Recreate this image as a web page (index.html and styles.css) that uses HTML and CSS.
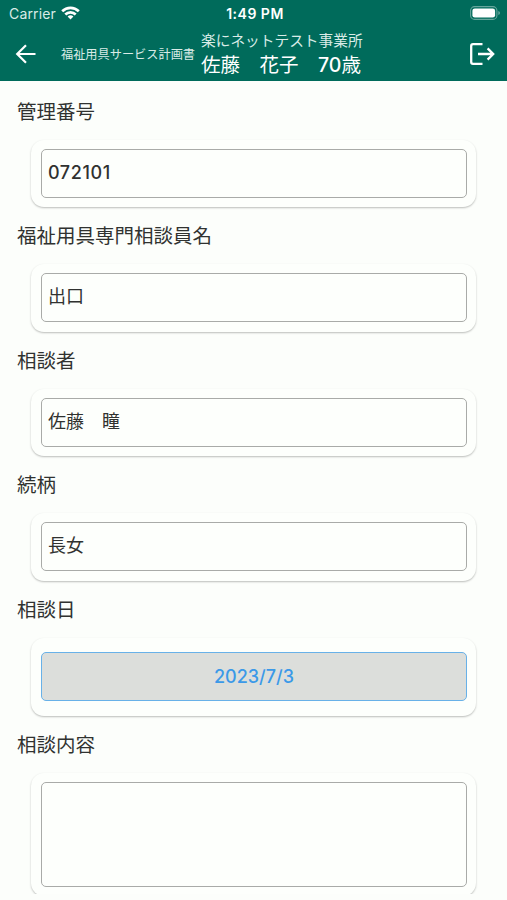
FILE: index.html
```html
<!DOCTYPE html>
<html lang="ja">
<head>
<meta charset="utf-8">
<title>福祉用具サービス計画書</title>
<link rel="stylesheet" href="styles.css">
</head>
<body>
<div class="screen">
  <header class="header">
    <div class="status">
      <div class="carrier">
        <span>Carrier</span>
        <svg class="wifi" width="19" height="14" viewBox="0 0 19 14" fill="none" stroke="#fff" stroke-width="2.7">
          <path d="M1.2 5.2a11.8 11.8 0 0 1 16.6 0"/>
          <path d="M4.3 8.5a7.4 7.4 0 0 1 10.4 0"/>
          <path d="M9.5 13.6l-2.9-3a4.1 4.1 0 0 1 5.8 0z" fill="#fff" stroke="none"/>
        </svg>
      </div>
      <span class="time">1:49 PM</span>
      <svg class="battery" width="31" height="14" viewBox="0 0 31 14">
        <rect x=".6" y=".6" width="26.3" height="12.8" rx="4" fill="none" stroke="#fff" stroke-opacity=".4" stroke-width="1.1"/>
        <rect x="2.4" y="2.4" width="22.7" height="9.2" rx="2.4" fill="#fff"/>
        <path d="M28.4 5v4q1.5-.6 1.5-2t-1.5-2z" fill="#fff" fill-opacity=".45"/>
      </svg>
    </div>
    <div class="bar">
      <svg class="back" width="22" height="20" viewBox="0 0 22 20" fill="none" stroke="#fff" stroke-width="2.2">
        <path d="M20.5 10H2.5M11 1.2L2.2 10l8.8 8.8"/>
      </svg>
      <span class="title">福祉用具サービス計画書</span>
      <div class="client">
        <span class="office">楽にネットテスト事業所</span>
        <span class="person">佐藤　花子　<b>70</b>歳</span>
      </div>
      <svg class="logout" width="26" height="24" viewBox="0 0 26 24" fill="none" stroke="#fff" stroke-width="2.3">
        <path d="M13.5 2.2H4Q2.2 2.2 2.2 4v16q0 1.8 1.8 1.8h9.5" stroke-linejoin="round"/>
        <path d="M9 12h15M18.6 6.4l5.6 5.6-5.6 5.6"/>
      </svg>
    </div>
  </header>
  <main class="form">
    <section><h2>管理番号</h2><div class="card"><div class="field latin">072101</div></div></section>
    <section><h2>福祉用具専門相談員名</h2><div class="card"><div class="field">出口</div></div></section>
    <section><h2>相談者</h2><div class="card"><div class="field">佐藤　瞳</div></div></section>
    <section><h2>続柄</h2><div class="card"><div class="field">長女</div></div></section>
    <section><h2>相談日</h2><div class="card card-date"><div class="field date">2023/7/3</div></div></section>
    <section><h2>相談内容</h2><div class="card card-memo"><div class="field memo"></div></div></section>
  </main>
</div>
</body>
</html>
```
FILE: styles.css
```css
* { box-sizing: border-box; }
body { margin: 0; background: #fcfefb; font-family: Inter, "Noto Sans CJK JP", sans-serif; }
.screen { height: 900px; padding-bottom: 6px; display: flex; flex-direction: column; overflow: hidden; }
.header { height: 81px; flex: none; background: #006b5b; color: #fff; }
.status { height: 27px; padding: 0 6px 0 9px; display: grid; grid-template-columns: 1fr auto 1fr; align-items: center; font-size: 14px; }
.carrier { display: flex; align-items: center; gap: 5px; letter-spacing: .15px; color: #d9ebe7; }
.wifi { margin-top: -2px; }
.time { font-size: 14px; font-weight: 600; letter-spacing: .5px; }
.battery { justify-self: end; margin-top: -1px; }
.bar { height: 53px; padding: 0 12px 0 15px; display: flex; align-items: center; }
.title { margin-left: 24px; width: 134px; font-size: 12.2px; white-space: nowrap; color: #d9ebe7; }
.client { margin-left: 6px; display: flex; flex-direction: column; }
.office { font-size: 14.7px; line-height: 22px; color: #d9ebe7; white-space: nowrap; }
.person { font-size: 19.5px; line-height: 26px; white-space: nowrap; }
.person b { font-weight: 500; }
.logout { margin-left: auto; }
.form { padding-top: 1.5px; flex: 1; min-height: 0; overflow: hidden; }
h2 { margin: 0; height: 57px; padding: 0 17px; font-size: 19.5px; font-weight: 400; line-height: 59px; color: #303230; }
.card { height: 67.6px; margin: 0 31px; padding: 9px 9px 0 10px; border-radius: 13px; background: #fdfffc; box-shadow: 0 1px 2px rgba(0,0,0,.26); }
.field { height: 49px; padding: 0 6px; border: 1.5px solid #a9aba8; border-radius: 5px; font-size: 18px; line-height: 45px; color: #303230; }
.latin { font-weight: 500; letter-spacing: .6px; }
.card-date { height: 78px; padding-top: 14.5px; }
.date { border-color: #68b1e8; background: #dcdedb; color: #3b99e8; text-align: center; font-weight: 500; line-height: 47px; }
.card-memo { height: 123.5px; }
.memo { height: 105px; }
```
